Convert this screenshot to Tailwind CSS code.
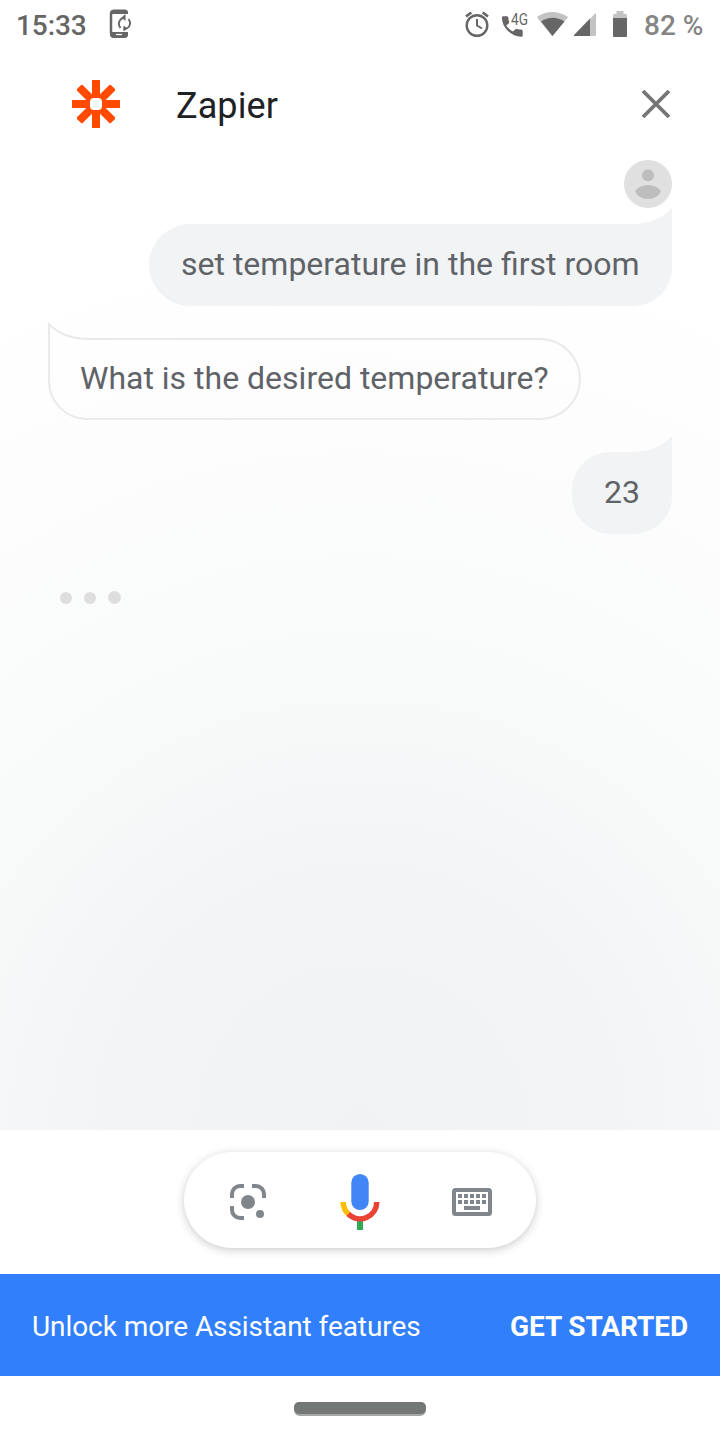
<!DOCTYPE html>
<html lang="en">
<head>
<meta charset="utf-8">
<title>Assistant</title>
<script src="https://cdn.jsdelivr.net/npm/@tailwindcss/browser@4"></script>
</head>
<body class="w-[720px] h-[1440px] overflow-hidden bg-white font-['Roboto',sans-serif] flex flex-col">
<div class="h-[1130px] flex flex-col bg-[radial-gradient(circle_900px_at_360px_1130px,#f1f2f4_0%,#f3f4f6_28%,#f8f9f9_48%,#fafbfb_62%,#fdfdfd_82%,#ffffff_100%)]">
  <!-- Status bar -->
  <header class="h-[50px] shrink-0 flex items-start text-[#666] whitespace-nowrap">
    <div class="w-[92px] pl-[16px] pt-[6px] text-[28px] leading-[40px] tracking-[-0.1px] font-medium">15:33</div>
    <svg class="w-[40px] h-[50px]" viewBox="92 0 40 50" fill="none">
      <path d="M127 14V13Q127 10.500 124.500 10.500H114.500Q111 10.500 111 14V34Q111 37 114.500 37H124Q127 37 127 34V32" stroke="#666" stroke-width="2"/>
      <path d="M110 14V13Q110 10 113 10H125Q128 10 128 13V14ZM110 32H128V34Q128 38 124 38H114Q110 38 110 34Z" fill="#666"/>
      <path d="M111 13V33" stroke="#666" stroke-width="2.500"/>
      <path d="M116 34.500H122" stroke="#fff" stroke-width="1.200"/>
      <path d="M120.500 28Q117.500 24 120 20.300Q121.500 17.800 125 17.800M128.500 19Q131.500 23 128.700 27Q127 29 123.500 29" stroke="#666" stroke-width="1.900"/>
      <path d="M125.500 14V21L121.500 17.500ZM123.500 25.500V31.500L127.500 28.500Z" fill="#666"/>
    </svg>
    <svg class="w-[190px] h-[50px] ml-[324px]" viewBox="456 0 190 50" fill="none">
      <circle cx="477" cy="25.500" r="10.300" stroke="#666" stroke-width="2.400"/>
      <path d="M477 19V25.500L482 28.500" stroke="#666" stroke-width="2"/>
      <path d="M466 16.500L471.300 12.500M482.700 12.500L488 16.500" stroke="#666" stroke-width="2.800"/>
      <path d="M503.200 16.200H506.900Q508.200 16.200 508.300 17.500Q508.400 19.800 509.100 21.800Q509.300 22.700 508.700 23.400L506.200 25.500Q508.900 29.400 512.900 31.500L515.400 29.200Q516.100 28.600 517 28.900Q519 29.500 521.200 29.600Q522.700 29.700 522.700 31V35.200Q522.700 36.700 521.200 36.700Q513.400 36.400 507.700 30.700Q502 25 501.900 17.500Q501.900 16.200 503.200 16.200Z" fill="#666"/>
      <text x="511" y="24.500" font-size="16.500" textLength="17" lengthAdjust="spacingAndGlyphs" fill="#666">4G</text>
      <path d="M552 36L536.800 17Q552 7 568.200 17Z" fill="#c3c3c3"/>
      <path d="M552.500 36L541 21.500Q552.500 14 564.500 21.500Z" fill="#666"/>
      <path d="M595 13.500Q596 13 596 14V34.500Q596 36 594.500 36H590V19Z" fill="#c3c3c3"/>
      <path d="M590 18.500V36H575Q573 36 574.500 34.500Z" fill="#666"/>
      <path d="M613 18V15.500Q613 14 614.500 14H616.500V11H623.500V14H625.500Q627 14 627 15.500V18Z" fill="#c3c3c3"/>
      <path d="M613 18H627V36Q627 37 626 37H614Q613 37 613 36Z" fill="#666"/>
    </svg>
    <div class="pt-[6px] -ml-[2px] text-[28px] leading-[40px] font-medium text-[#858585]">82 %</div>
  </header>

  <!-- App title -->
  <div class="h-[110px] shrink-0 flex items-start pl-[72px] pr-[48px]">
    <svg class="w-[48px] h-[48px] mt-[30px]" viewBox="-24 -24 48 48" fill="#ff4a00">
      <rect x="-4" y="-24" width="8" height="48"/>
      <rect x="-24" y="-4" width="48" height="8"/>
      <rect x="-4" y="-24" width="8" height="48" rx="1.500" transform="rotate(45)"/>
      <rect x="-4" y="-24" width="8" height="48" rx="1.500" transform="rotate(-45)"/>
      <rect x="-6" y="-6" width="12" height="12" rx="4" fill="#fff"/>
    </svg>
    <h1 class="ml-[56px] mt-[32px] text-[36px] leading-[48px] tracking-[0.1px] text-[#202124]">Zapier</h1>
    <svg class="w-[32px] h-[32px] ml-auto mt-[38px]" viewBox="0 0 32 32"><path d="M3 3L29 29M29 3L3 29" stroke="#757575" stroke-width="3.800"/></svg>
  </div>

  <!-- Conversation -->
  <main class="flex-1 px-[48px] flex flex-col text-[32px] leading-[40px] text-[#5f6368] whitespace-nowrap">
    <svg class="w-[48px] h-[48px] self-end shrink-0" viewBox="0 0 48 48">
      <circle cx="24" cy="24" r="24" fill="#e0e0e0"/><circle cx="24" cy="15.300" r="6" fill="#bdbdbd"/>
      <path d="M11 31.500Q15 25 24 25T37 31.500Q33 39 24 39T11 31.500Z" fill="#bdbdbd"/>
    </svg>
    <div class="relative self-end w-[523px] h-[98px] pl-[32px] pt-[36px]">
      <svg class="absolute inset-0 w-full h-full" viewBox="0 0 523 98"><path d="M523 0V60A38 38 0 0 1 485 98H41A41 41 0 0 1 41 16H483Q508 16 523 0Z" fill="#f1f3f4"/></svg>
      <p class="relative">set temperature in the first room</p>
    </div>
    <div class="relative w-[533px] h-[98px] mt-[16px] pl-[32px] pt-[36px]">
      <svg class="absolute inset-0 w-full h-full" viewBox="0 0 533 98"><path d="M1 2V59A38 38 0 0 0 39 97H492A40 40 0 0 0 492 17H41Q15 17 1 2Z" fill="none" stroke="#e8eaed" stroke-width="2"/></svg>
      <p class="relative">What is the desired temperature?</p>
    </div>
    <div class="relative self-end w-[100px] h-[98px] mt-[16px] pl-[32px] pt-[36px]">
      <svg class="absolute inset-0 w-full h-full" viewBox="0 0 100 98"><path d="M100 0V60A38 38 0 0 1 62 98H38A38 38 0 0 1 0 60V54A38 38 0 0 1 38 16H60Q85 16 100 0Z" fill="#f1f3f4"/></svg>
      <p class="relative">23</p>
    </div>
    <svg class="w-[80px] h-[20px] mt-[54px]" viewBox="48 588 80 20" fill="#dedede"><circle cx="66" cy="598" r="6"/><circle cx="90" cy="598" r="6"/><circle cx="114.500" cy="597.500" r="6.500"/></svg>
  </main>
</div>

<!-- Input controls -->
<div class="h-[144px] shrink-0 flex justify-center pt-[22px]">
  <div class="w-[352px] h-[96px] rounded-full bg-white shadow-[0_2px_8px_rgba(60,64,67,0.28)]">
    <svg class="w-[352px] h-[96px]" viewBox="184 1152 352 96" fill="none">
      <g stroke="#80868b" stroke-width="4">
        <path d="M232 1198V1194A8 8 0 0 1 240 1186H244M252 1186H256A8 8 0 0 1 264 1194V1198M232 1206V1210A8 8 0 0 0 240 1218H244"/>
      </g>
      <circle cx="248" cy="1202" r="7" fill="#80868b"/><circle cx="260" cy="1214" r="4" fill="#80868b"/>
      <path d="M360 1220V1230" stroke="#34a853" stroke-width="6"/>
      <path d="M343.200 1202A16.800 16.800 0 0 0 348.800 1214.500" stroke="#fbbc04" stroke-width="5.500"/>
      <path d="M348.300 1214A16.800 16.800 0 0 0 376.800 1202" stroke="#ea4335" stroke-width="5.500"/>
      <rect x="351.300" y="1174" width="17.400" height="36" rx="8.700" fill="#4285f4"/>
      <rect x="454" y="1190" width="36" height="24" rx="1.500" stroke="#80868b" stroke-width="4"/>
      <path d="M458 1196H486M458 1202H486" stroke="#80868b" stroke-width="4" stroke-dasharray="4 2"/>
      <path d="M464 1208H480" stroke="#80868b" stroke-width="4"/>
    </svg>
  </div>
</div>

<!-- Promo banner -->
<div class="h-[102px] shrink-0 bg-[#317ffb] text-white px-[32px] pt-1 flex items-center justify-between text-[28px] leading-[40px] whitespace-nowrap">
  <span class="tracking-[-0.07px]">Unlock more Assistant features</span>
  <span class="font-bold tracking-[-0.1px]">GET STARTED</span>
</div>

<!-- Gesture bar -->
<div class="h-[64px] shrink-0 flex justify-center pt-[26px]">
  <div class="w-[132px] h-[14px] rounded-[6px] bg-[#a6a8a7]"><div class="h-[12px] rounded-[5px] bg-[#737776]"></div></div>
</div>
</body>
</html>
